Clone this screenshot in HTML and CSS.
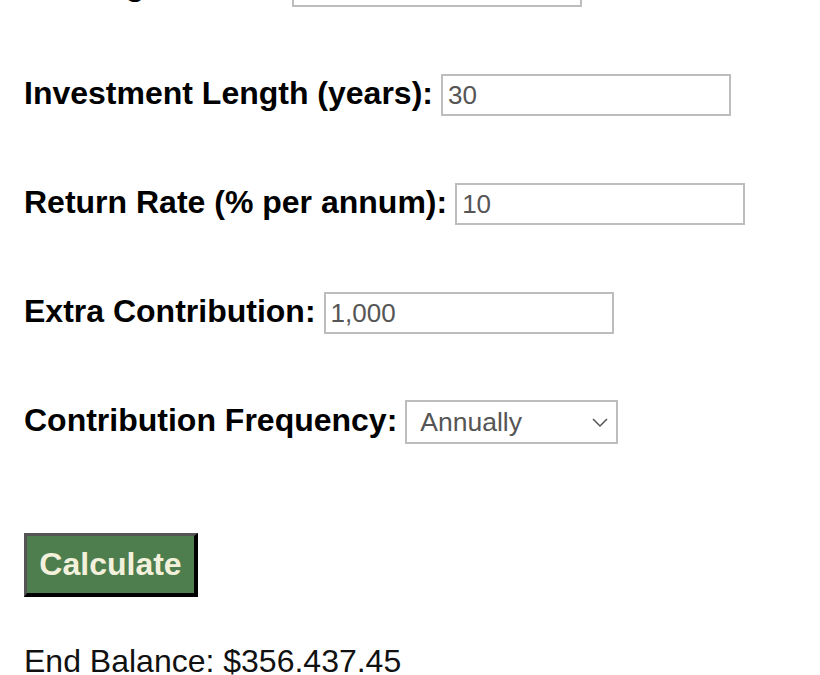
FILE: index.html
```html
<!DOCTYPE html>
<html lang="en">
<head>
  <meta charset="UTF-8">
  <meta name="viewport" content="width=device-width, initial-scale=1.0">
  <title>Compound Interest Calculator</title>
  <link rel="stylesheet" href="styles.css">
</head>
<body>
  <div class="container">
    <form id="calcForm">
      <div class="row">
        <label for="start">Starting Amount:</label>
        <input type="text" id="start" name="start" class="field" value="">
      </div>
      <div class="row">
        <label for="years">Investment Length (years):</label>
        <input type="text" id="years" name="years" class="field" value="30">
      </div>
      <div class="row">
        <label for="rate">Return Rate (% per annum):</label>
        <input type="text" id="rate" name="rate" class="field" value="10">
      </div>
      <div class="row">
        <label for="extra">Extra Contribution:</label>
        <input type="text" id="extra" name="extra" class="field" value="1,000">
      </div>
      <div class="row">
        <label for="freq">Contribution Frequency:</label>
        <div class="select-wrap">
          <select id="freq" name="freq">
            <option value="annually">Annually</option>
            <option value="monthly">Monthly</option>
          </select>
          <svg class="chevron" width="16" height="10" viewBox="0 0 16 10">
            <path d="M1 1 L8 8 L15 1" fill="none" stroke="#555" stroke-width="1.5"/>
          </svg>
        </div>
      </div>
      <button type="submit">Calculate</button>
    </form>
    <div class="result" id="result">End Balance: $356.437.45</div>
  </div>
</body>
</html>
```

FILE: styles.css
```css
body {
  font-family: 'Liberation Sans', Arial, sans-serif;
  margin: 0;
  padding: 0;
  background: #fff;
  color: #000;
}

.container {
  margin-top: -36px;
  padding: 0 24px;
}

.row {
  display: flex;
  align-items: center;
  gap: 8px;
  height: 44px;
  margin-bottom: 65px;
}

label {
  font-size: 32px;
  font-weight: bold;
  white-space: nowrap;
  margin-bottom: 3px;
}

.field {
  width: 290px;
  height: 42px;
  box-sizing: border-box;
  border: 2px solid #bdbdbd;
  padding: 0 5px;
  font-family: 'Liberation Sans', Arial, sans-serif;
  font-size: 26px;
  color: #555;
  outline: none;
}

.select-wrap {
  position: relative;
}

select {
  width: 213px;
  height: 44px;
  box-sizing: border-box;
  border: 2px solid #bdbdbd;
  padding: 0 13px;
  background: #fff;
  font-family: 'Liberation Sans', Arial, sans-serif;
  font-size: 26.5px;
  color: #555;
  appearance: none;
  -webkit-appearance: none;
  border-radius: 0;
}

.chevron {
  position: absolute;
  right: 10px;
  top: 18px;
  pointer-events: none;
}

button {
  display: block;
  margin-top: 89px;
  width: 174px;
  height: 64px;
  box-sizing: border-box;
  background: #4e7d4e;
  color: #f3f1dc;
  border-style: solid;
  border-width: 3px 4px 4px 3px;
  border-color: #555 #000 #000 #555;
  font-family: 'Liberation Sans', Arial, sans-serif;
  font-size: 32px;
  font-weight: bold;
  padding: 0;
  cursor: pointer;
}

.result {
  margin-top: 46px;
  font-size: 32px;
  color: #111;
}
```
